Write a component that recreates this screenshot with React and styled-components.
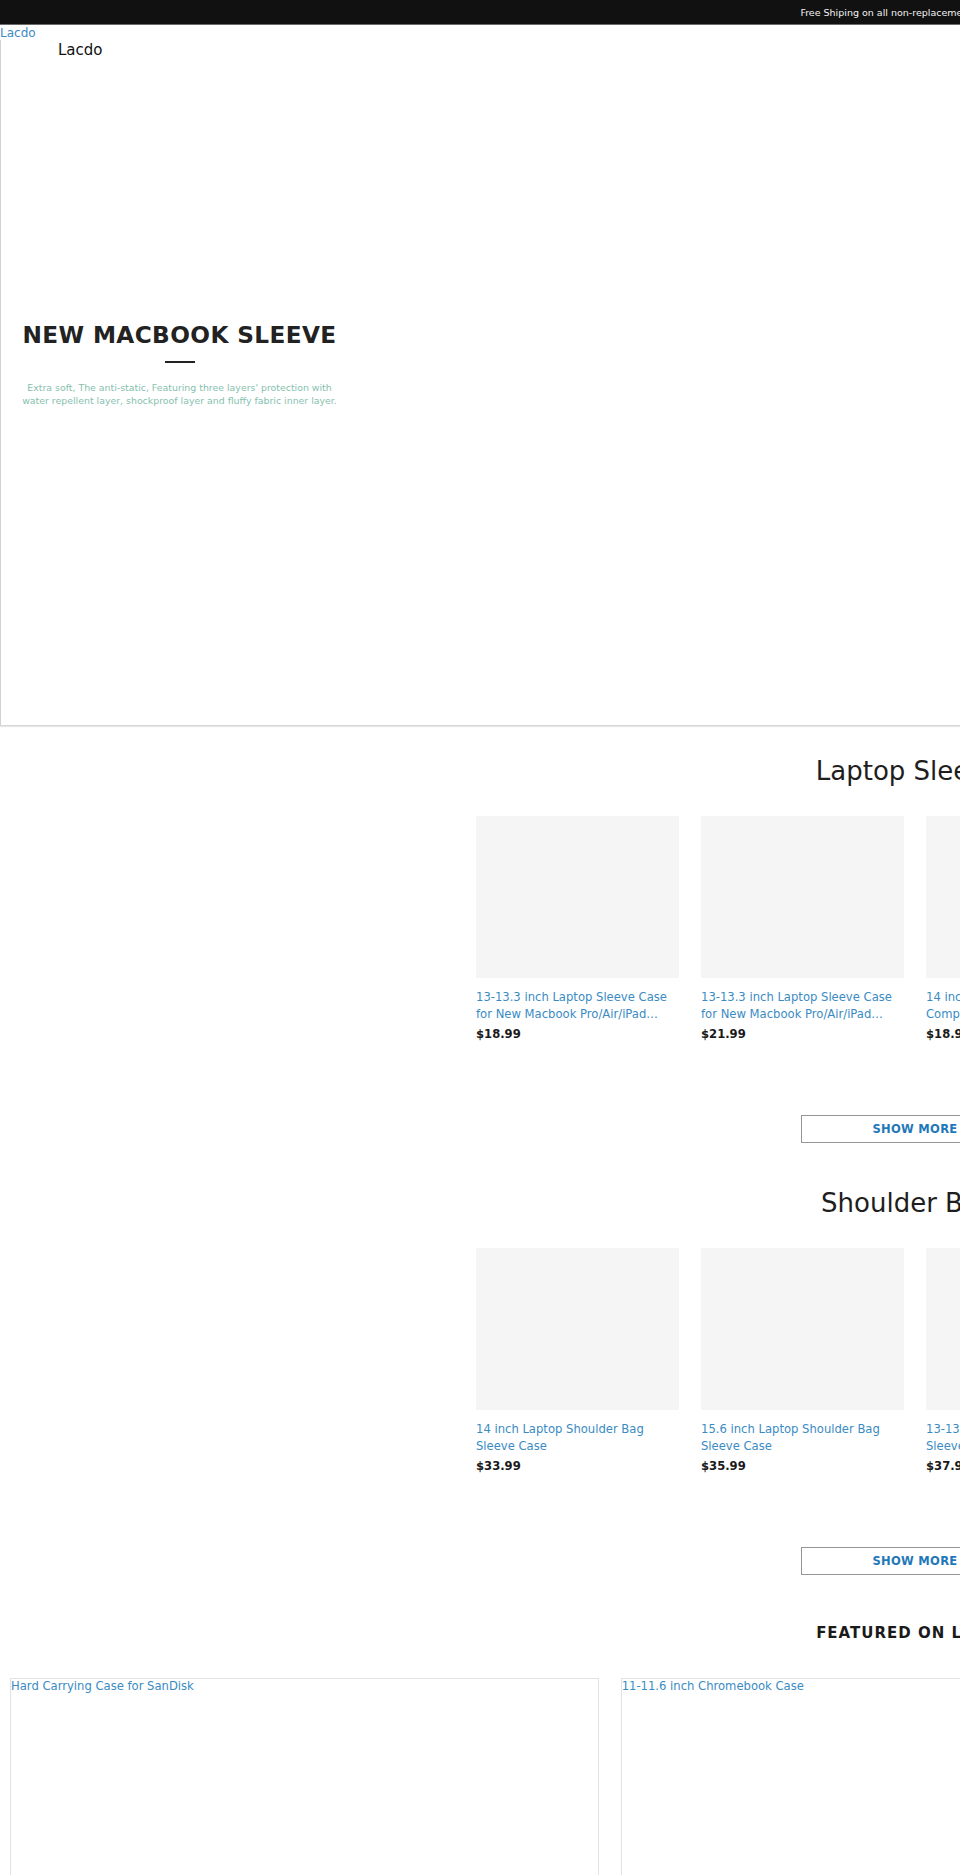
import React from "react";
import styled, { createGlobalStyle } from "styled-components";

const GlobalStyle = createGlobalStyle`
  html, body {
    margin: 0;
    padding: 0;
    overflow: hidden;
    background: #fff;
  }
  body {
    font-family: "DejaVu Sans", Verdana, sans-serif;
    color: #222;
  }
  * {
    box-sizing: border-box;
  }
`;

const Page = styled.div`
  width: 1830px;
  background: #fff;
`;

const TopBar = styled.div`
  height: 25px;
  background: #111;
  border-bottom: 1px solid #6a6a6a;
  display: flex;
  align-items: center;
  justify-content: center;
  padding-right: 28px;
  color: #f2f2f2;
  font-size: 9.5px;
`;

const LogoLink = styled.a`
  display: block;
  width: max-content;
  padding-top: 2px;
  font-size: 12px;
  line-height: 13px;
  color: #3a8bc4;
  text-decoration: none;
`;

const Hero = styled.section`
  height: 686px;
  border-left: 1px solid #d2d2d2;
  border-bottom: 1px solid #d6d6d6;
  box-shadow: 0 1px 1px #e8e8e8;
  display: flex;
  flex-direction: column;
`;

const Brand = styled.div`
  padding: 1px 0 0 57px;
  font-size: 15px;
  line-height: 18px;
  color: #111;
`;

const Caption = styled.div`
  width: 357px;
  margin-top: 262px;
  display: flex;
  flex-direction: column;
  align-items: center;
  text-align: center;
`;

const HeroTitle = styled.h1`
  margin: 0;
  font-size: 23.2px;
  line-height: 28px;
  font-weight: bold;
  letter-spacing: 0.4px;
  color: #222;
`;

const Rule = styled.span`
  display: block;
  width: 30px;
  height: 2px;
  margin-top: 12px;
  background: #222;
`;

const HeroText = styled.p`
  width: 320px;
  margin: 19px 0 0;
  font-size: 9.4px;
  line-height: 12.5px;
  color: #86bfae;
`;

const Collection = styled.section`
  display: flex;
  flex-direction: column;
  align-items: center;
  padding-top: ${(p) => p.$top}px;
`;

const CollectionTitle = styled.h2`
  margin: 0;
  font-size: 26px;
  line-height: 34px;
  font-weight: normal;
  color: #1e1e1e;
`;

const Grid = styled.div`
  margin-top: 28px;
  display: grid;
  grid-template-columns: repeat(4, 203px);
  column-gap: 22px;
`;

const Card = styled.div`
  display: flex;
  flex-direction: column;
`;

const Thumb = styled.div`
  height: 162px;
  background: #f5f5f5;
`;

const CardTitle = styled.a`
  margin-top: 11px;
  font-size: 11.6px;
  line-height: 17px;
  color: #3a8bc4;
  text-decoration: none;
  display: -webkit-box;
  -webkit-line-clamp: 2;
  -webkit-box-orient: vertical;
  overflow: hidden;
`;

const Price = styled.div`
  margin-top: 3px;
  font-size: 11.6px;
  line-height: 16px;
  font-weight: bold;
  color: #1a1a1a;
`;

const MoreButton = styled.button`
  margin-top: 73px;
  width: 228px;
  height: 28px;
  background: #fff;
  border: 1px solid #959595;
  font-family: "DejaVu Sans", Verdana, sans-serif;
  font-size: 11.5px;
  font-weight: bold;
  letter-spacing: 0.3px;
  color: #1f78b9;
  cursor: pointer;
`;

const Featured = styled.section`
  padding: 49px 10px 0;
  display: flex;
  flex-direction: column;
  align-items: center;
`;

const FeaturedTitle = styled.h3`
  margin: 0;
  font-size: 15px;
  line-height: 18px;
  font-weight: bold;
  letter-spacing: 1px;
  color: #1a1a1a;
`;

const FeaturedGrid = styled.div`
  margin-top: 36px;
  width: 100%;
  display: grid;
  grid-template-columns: repeat(3, 1fr);
  column-gap: 22px;
`;

const FeaturedCard = styled.a`
  display: block;
  height: 480px;
  border: 1px solid #e2e2e2;
  font-size: 11.6px;
  line-height: 14px;
  color: #3a8bc4;
  text-decoration: none;
`;

const sleeves = [
  { id: 1, name: "13-13.3 inch Laptop Sleeve Case for New Macbook Pro/Air/iPad Pro/Surface Book", price: "18.99" },
  { id: 2, name: "13-13.3 inch Laptop Sleeve Case for New Macbook Pro/Air/iPad Pro/Surface Book", price: "21.99" },
  { id: 3, name: "14 inch Laptop Sleeve Case Compatible with MacBook Pro", price: "18.99" },
  { id: 4, name: "15.6 inch Laptop Sleeve Case Compatible with Notebook", price: "19.99" },
];

const shoulderBags = [
  { id: 1, name: "14 inch Laptop Shoulder Bag Sleeve Case", price: "33.99" },
  { id: 2, name: "15.6 inch Laptop Shoulder Bag Sleeve Case", price: "35.99" },
  { id: 3, name: "13-13.3 inch Laptop Shoulder Bag Sleeve Case", price: "37.99" },
  { id: 4, name: "17 inch Laptop Shoulder Bag Sleeve Case", price: "39.99" },
];

const featured = [
  "Hard Carrying Case for SanDisk",
  "11-11.6 inch Chromebook Case",
  "15.6 inch Laptop Sleeve Case",
];

const ProductGrid = ({ items }) => (
  <Grid>
    {items.map((item) => (
      <Card key={item.id}>
        <Thumb />
        <CardTitle href="#">{item.name}</CardTitle>
        <Price>${item.price}</Price>
      </Card>
    ))}
  </Grid>
);

export default function App() {
  return (
    <Page>
      <GlobalStyle />
      <TopBar>Free Shiping on all non-replacement items</TopBar>
      <LogoLink href="#">Lacdo</LogoLink>

      <Hero>
        <Brand>Lacdo</Brand>
        <Caption>
          <HeroTitle>NEW MACBOOK SLEEVE</HeroTitle>
          <Rule />
          <HeroText>
            Extra soft, The anti-static, Featuring three layers' protection with
            water repellent layer, shockproof layer and fluffy fabric inner layer.
          </HeroText>
        </Caption>
      </Hero>

      <Collection $top={28}>
        <CollectionTitle>Laptop Sleeves</CollectionTitle>
        <ProductGrid items={sleeves} />
        <MoreButton>SHOW MORE</MoreButton>
      </Collection>

      <Collection $top={43}>
        <CollectionTitle>Shoulder Bags</CollectionTitle>
        <ProductGrid items={shoulderBags} />
        <MoreButton>SHOW MORE</MoreButton>
      </Collection>

      <Featured>
        <FeaturedTitle>FEATURED ON LACDO</FeaturedTitle>
        <FeaturedGrid>
          {featured.map((name) => (
            <FeaturedCard key={name} href="#">
              {name}
            </FeaturedCard>
          ))}
        </FeaturedGrid>
      </Featured>
    </Page>
  );
}
